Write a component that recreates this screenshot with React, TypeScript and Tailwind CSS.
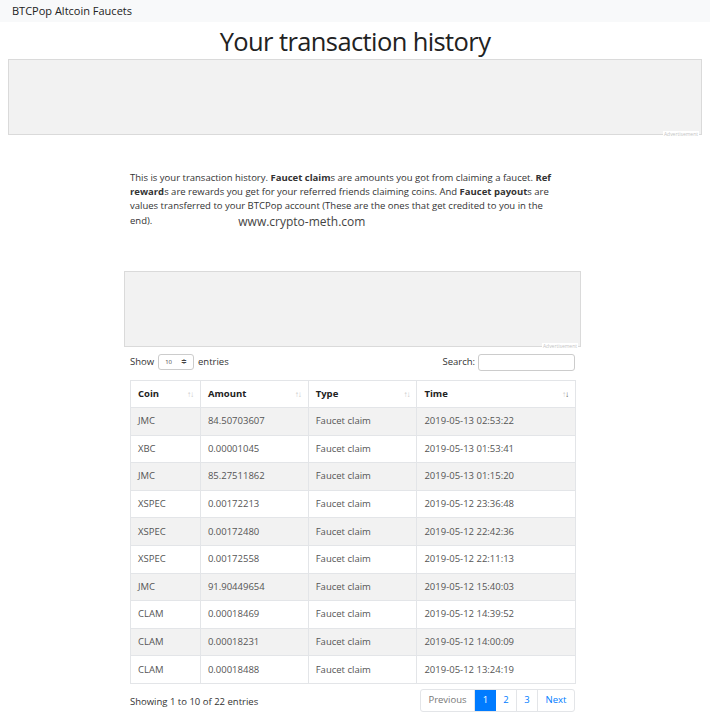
import React from "react";

const rows = [
  ["JMC", "84.50703607", "Faucet claim", "2019-05-13 02:53:22"],
  ["XBC", "0.00001045", "Faucet claim", "2019-05-13 01:53:41"],
  ["JMC", "85.27511862", "Faucet claim", "2019-05-13 01:15:20"],
  ["XSPEC", "0.00172213", "Faucet claim", "2019-05-12 23:36:48"],
  ["XSPEC", "0.00172480", "Faucet claim", "2019-05-12 22:42:36"],
  ["XSPEC", "0.00172558", "Faucet claim", "2019-05-12 22:11:13"],
  ["JMC", "91.90449654", "Faucet claim", "2019-05-12 15:40:03"],
  ["CLAM", "0.00018469", "Faucet claim", "2019-05-12 14:39:52"],
  ["CLAM", "0.00018231", "Faucet claim", "2019-05-12 14:00:09"],
  ["CLAM", "0.00018488", "Faucet claim", "2019-05-12 13:24:19"],
];

function AdBox({ className }: { className: string }) {
  return (
    <div className={`relative h-[76px] bg-[#f2f2f2] border border-[#dadada] ${className}`}>
      <span className="absolute right-[2px] bottom-[-4px] bg-white px-[1px] text-[5px] leading-[7px] text-[#c4c4c4]">
        Advertisement
      </span>
    </div>
  );
}

function SortHead({ label, w, active }: { label: string; w: string; active?: boolean }) {
  return (
    <th className={`${w} h-[27px] border border-[#e3e5e8] px-[7px] text-left font-bold text-[#222]`}>
      <div className="flex items-center justify-between">
        <span>{label}</span>
        <span className="text-[8px] tracking-[-1px]">
          <span className="text-[#c8c8c8]">↑</span>
          <span className={active ? "text-[#555]" : "text-[#c8c8c8]"}>↓</span>
        </span>
      </div>
    </th>
  );
}

export default function App() {
  return (
    <div className="min-h-[727px] bg-white font-['Open_Sans','Noto_Sans',sans-serif] text-[#333]">
      <nav className="h-[22px] bg-[#f8f9fa] px-[12px] flex items-center text-[11px] text-[#222]">
        BTCPop Altcoin Faucets
      </nav>

      <h1 className="mt-[3px] h-[33px] text-center text-[25.5px] leading-[33px] tracking-[-0.6px] text-[#222]">
        Your transaction history
      </h1>

      <AdBox className="mx-[8px] mt-[1px]" />

      <div className="ml-[124px] w-[457px] pt-[36px]">
        <p className="px-[6px] text-[9.5px] leading-[14px] text-[#333]">
          This is your transaction history. <b>Faucet claim</b>s are amounts you got from claiming a faucet.{" "}
          <b>Ref reward</b>s are rewards you get for your referred friends claiming coins. And{" "}
          <b>Faucet payout</b>s are values transferred to your BTCPop account (These are the ones that get
          credited to you in the end).
          <span className="ml-[86px] relative top-[2px] text-[12px] text-[#444]">www.crypto-meth.com</span>
        </p>

        <AdBox className="mt-[43px]" />

        <div className="px-[6px]">
          <div className="mt-[6px] flex items-center justify-between h-[18px] text-[9.5px] text-[#333]">
            <div className="flex items-center gap-[4px]">
              <span>Show</span>
              <span className="flex items-center gap-[9px] h-[16px] border border-[#ccc] rounded-[3px] px-[6px] text-[6px] text-[#444]">
                10 <span className="text-[7px]">≑</span>
              </span>
              <span>entries</span>
            </div>
            <div className="flex items-center gap-[3px]">
              <span>Search:</span>
              <span className="w-[97px] h-[17px] border border-[#ccc] rounded-[3px]" />
            </div>
          </div>

          <table className="mt-[9px] w-[446px] border-collapse text-[9.5px]">
            <thead>
              <tr>
                <SortHead label="Coin" w="w-[70px]" />
                <SortHead label="Amount" w="w-[108px]" />
                <SortHead label="Type" w="w-[109px]" />
                <SortHead label="Time" w="w-[159px]" active />
              </tr>
            </thead>
            <tbody>
              {rows.map((r, i) => (
                <tr key={i} className={i % 2 === 0 ? "bg-[#f2f2f2]" : "bg-white"}>
                  {r.map((c, j) => (
                    <td key={j} className="h-[27.6px] border border-[#e3e5e8] px-[7px] text-[#555]">
                      {c}
                    </td>
                  ))}
                </tr>
              ))}
            </tbody>
          </table>

          <div className="mt-[5px] flex items-center justify-between text-[9.5px]">
            <span className="pt-[4px] text-[#333]">Showing 1 to 10 of 22 entries</span>
            <div className="flex h-[23px] border border-[#e3e5e8] rounded-[3px] overflow-hidden">
              <span className="w-[54px] flex items-center justify-center text-[#777] border-r border-[#e3e5e8]">Previous</span>
              <span className="w-[21px] flex items-center justify-center bg-[#007bff] text-white">1</span>
              <span className="w-[21px] flex items-center justify-center text-[#007bff] border-r border-[#e3e5e8]">2</span>
              <span className="w-[21px] flex items-center justify-center text-[#007bff] border-r border-[#e3e5e8]">3</span>
              <span className="w-[36px] flex items-center justify-center text-[#007bff]">Next</span>
            </div>
          </div>
        </div>
      </div>
    </div>
  );
}
